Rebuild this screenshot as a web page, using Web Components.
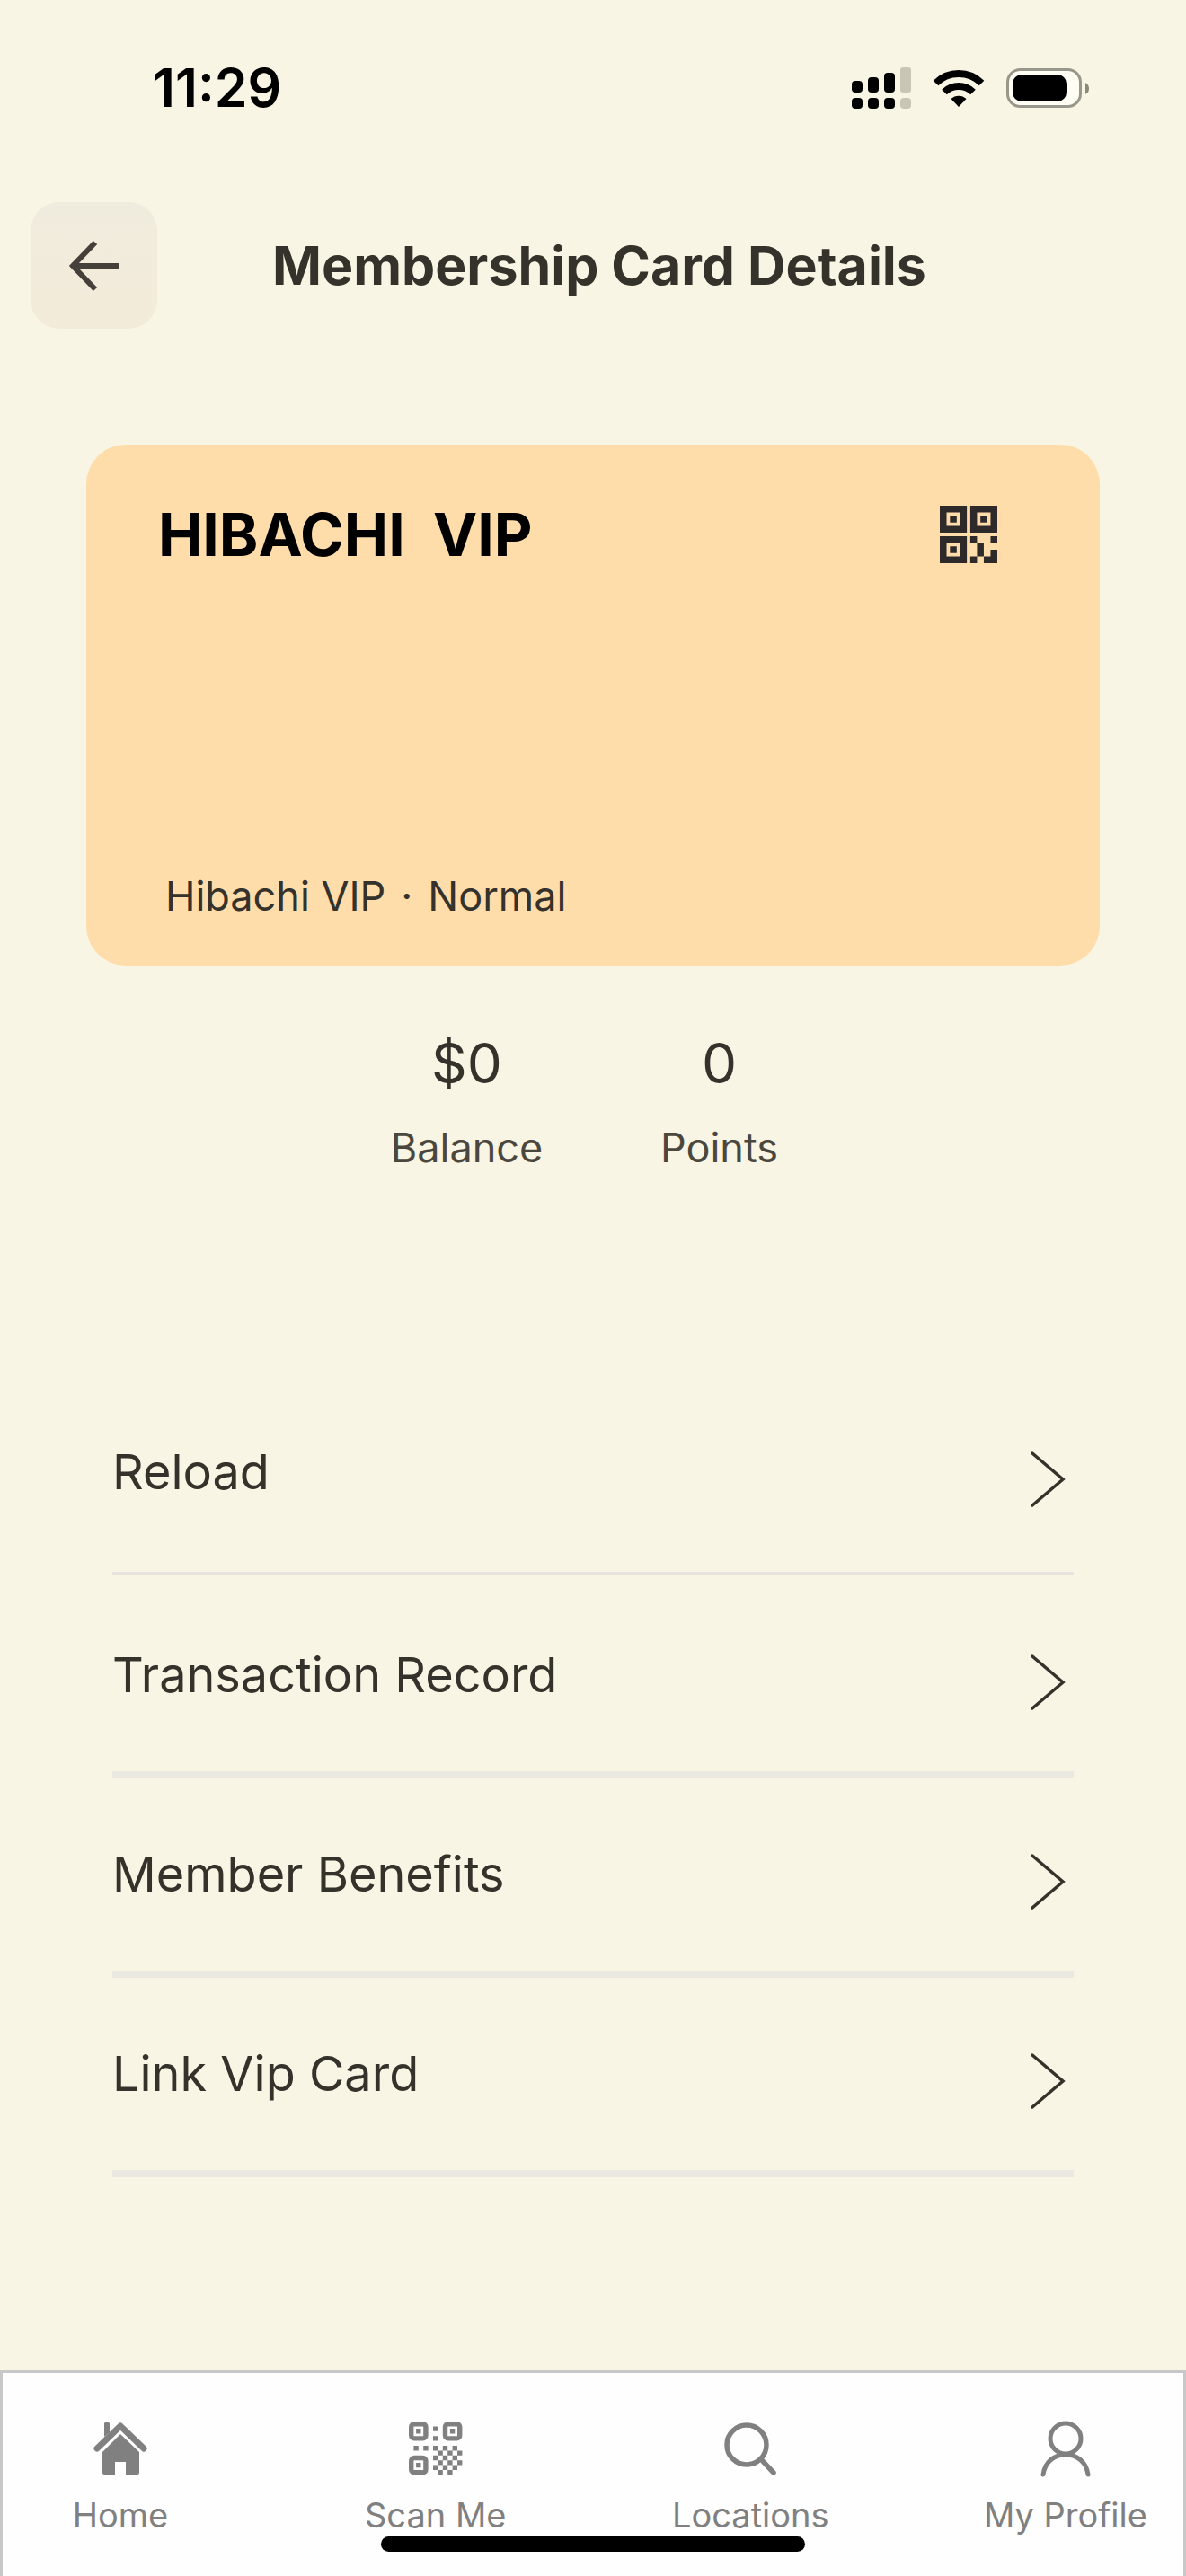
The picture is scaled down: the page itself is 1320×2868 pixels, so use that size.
<!DOCTYPE html>
<html lang="en">
<head>
<meta charset="utf-8">
<meta name="viewport" content="width=device-width, initial-scale=1">
<title>Membership Card Details</title>
<style>
html {
    background: #f9f5e4;
}

body {
    margin: 0;
    color: #35312b;
    font-family: Inter, "Liberation Sans", sans-serif;
}
</style>
</head>
<body>
<membership-page></membership-page>

<template id="status-bar">
<style>
:host {
    display: flex;
    align-items: center;
    justify-content: space-between;
    padding: 58px 107px 0 170px;
    color: #000;
}

time {
    font-size: 59px;
    font-weight: 600;
    line-height: 80px;
}

svg {
    display: block;
    width: 265px;
    height: 46px;
}
</style>
<time><slot></slot></time>
<svg viewBox="0 0 265 46" role="img" aria-label="Signal, Wi-Fi and battery">
    <g>
        <rect x="0" y="15" width="12" height="13" rx="4"/>
        <rect x="18" y="11" width="12" height="17" rx="4"/>
        <rect x="36" y="6" width="12" height="22" rx="4"/>
        <rect x="0" y="34" width="12" height="12" rx="4"/>
        <rect x="18" y="34" width="12" height="12" rx="4"/>
        <rect x="36" y="34" width="12" height="12" rx="4"/>
    </g>
    <g fill="#c9c6b6">
        <rect x="54" y="0" width="12" height="28" rx="3"/>
        <rect x="54" y="34" width="12" height="12" rx="4"/>
    </g>
    <g fill="none" stroke="#000" stroke-width="8">
        <path d="M93.500 17.500a36.500 36.500 0 0 1 51 0"/>
        <path d="M103 27.500a23 23 0 0 1 32 0"/>
    </g>
    <path d="M119 44l-8.500-9a12.500 12.500 0 0 1 17 0z"/>
    <rect x="173.500" y="2.500" width="81" height="41" rx="14" fill="#fffdf4" stroke="#99978a" stroke-width="3"/>
    <rect x="179" y="8" width="60" height="30" rx="10"/>
    <path d="M260 17q4 2 4 6.500t-4 6.500z" fill="#8a887c"/>
</svg>
</template>

<template id="page-header">
<style>
:host {
    display: grid;
    grid-template-columns: 141px 1fr 141px;
    align-items: center;
    padding: 87px 20px 0 34px;
}

button {
    display: flex;
    align-items: center;
    justify-content: center;
    height: 141px;
    padding: 0;
    border: 0;
    border-radius: 32px;
    background: linear-gradient(#f0ecdd, #f3ebda);
    color: #45403a;
    cursor: pointer;
}

svg {
    width: 60px;
    height: 60px;
}

h1 {
    margin: 0;
    font-size: 59px;
    font-weight: 700;
    line-height: 80px;
    text-align: center;
}
</style>
<button type="button" aria-label="Back">
    <svg viewBox="0 0 60 60" fill="none" stroke="currentColor" stroke-width="6">
        <path d="M31 4L6 30l25 26M6 30h52"/>
    </svg>
</button>
<h1><slot></slot></h1>
</template>

<template id="member-card">
<style>
:host {
    display: flex;
    flex-direction: column;
    justify-content: space-between;
    box-sizing: border-box;
    min-height: 580px;
    margin: 129px 96px 0;
    padding: 60px 114px 49px 80px;
    border-radius: 44px;
    background: #ffddab;
}

header {
    display: flex;
    align-items: center;
    justify-content: space-between;
}

h2 {
    margin: 0;
    color: #000;
    font-size: 66px;
    font-weight: 700;
    line-height: 80px;
    white-space: pre;
}

p {
    display: flex;
    gap: 17px;
    margin: 0;
    padding-left: 8px;
    font-size: 45px;
    line-height: 56px;
}

button {
    padding: 0;
    border: 0;
    background: none;
    color: #2e2a2a;
    cursor: pointer;
}

svg {
    display: block;
    width: 64px;
    height: 64px;
}
</style>
<header>
    <h2><slot name="name"></slot></h2>
    <button type="button" aria-label="Show QR code">
        <svg viewBox="0 0 17 17" fill="currentColor">
            <path fill-rule="evenodd" d="M0 0h8v8H0zM2 2v4h4V2zM9 0h8v8H9zM11 2v4h4V2zM0 9h8v8H0zM2 11v4h4v-4z"/>
            <path d="M3 3h2v2H3zM12 3h2v2h-2zM3 12h2v2H3z"/>
            <path d="M9 9h2v2H9zM15 9h2v2h-2zM11 11h2v4h-2zM9 15h2v2H9zM15 13h2v4h-4v-2h2z"/>
        </svg>
    </button>
</header>
<p><slot name="program"></slot><span>·</span><slot name="level"></slot></p>
</template>

<template id="member-stat">
<style>
:host {
    display: flex;
    flex-direction: column;
    gap: 26px;
    text-align: center;
}

.value {
    font-size: 62px;
    line-height: 80px;
}

.label {
    color: #4b473d;
    font-size: 45px;
    line-height: 56px;
}
</style>
<span class="value"><slot></slot></span>
<span class="label"></span>
</template>

<template id="menu-row">
<style>
:host {
    display: block;
    border-bottom: 8px solid #ebe7e1;
}

:host([first]) {
    margin-bottom: 4px;
    border-bottom: 4px solid #e8e3df;
}

a {
    display: flex;
    justify-content: space-between;
    min-height: 147px;
    padding: 67px 8px 0 0;
    color: inherit;
    font-size: 54px;
    line-height: 80px;
    text-decoration: none;
}

:host([first]) a {
    min-height: 151px;
}

svg {
    width: 44px;
    height: 64px;
    margin-top: 16px;
}
</style>
<a href="#">
    <slot></slot>
    <svg viewBox="0 0 44 64" fill="none" stroke="currentColor" stroke-width="3.500" stroke-linecap="round" aria-hidden="true">
        <path d="M6 3l34 29L6 61"/>
    </svg>
</a>
</template>

<template id="tab-item">
<style>
:host {
    display: block;
    width: 212px;
}

a {
    display: flex;
    flex-direction: column;
    align-items: center;
    gap: 20px;
    color: #808080;
    font-size: 38px;
    line-height: 48px;
    text-decoration: none;
    white-space: nowrap;
}

svg {
    width: 60px;
    height: 60px;
    overflow: visible;
}
</style>
<a href="#">
    <svg viewBox="0 0 60 60" aria-hidden="true"></svg>
    <slot></slot>
</a>
</template>

<template id="tab-bar">
<style>
:host {
    display: block;
    position: relative;
    border: 3px solid #c8c8c8;
    border-bottom: 0;
    background: #fefefe;
}

nav {
    display: flex;
    justify-content: space-between;
    padding: 54px 25px 44px;
}

.indicator {
    position: absolute;
    bottom: 27px;
    left: 50%;
    width: 472px;
    height: 17px;
    margin-left: -236px;
    border-radius: 9px;
    background: #000;
}
</style>
<nav><slot></slot></nav>
<div class="indicator"></div>
</template>

<template id="membership-page">
<style>
:host {
    display: flex;
    flex-direction: column;
    min-height: 100vh;
}

main {
    flex: 1;
}

.stats {
    display: grid;
    grid-template-columns: 281px 281px;
    justify-content: center;
    margin-top: 69px;
}

.menu {
    margin: 226px 125px 48px;
}
</style>
<status-bar>11:29</status-bar>
<page-header>Membership Card Details</page-header>
<main>
    <member-card>
        <span slot="name">HIBACHI&nbsp; VIP</span>
        <span slot="program">Hibachi VIP</span>
        <span slot="level">Normal</span>
    </member-card>
    <div class="stats">
        <member-stat label="Balance">$0</member-stat>
        <member-stat label="Points">0</member-stat>
    </div>
    <div class="menu">
        <menu-row first>Reload</menu-row>
        <menu-row>Transaction Record</menu-row>
        <menu-row>Member Benefits</menu-row>
        <menu-row>Link Vip Card</menu-row>
    </div>
</main>
<tab-bar>
    <tab-item icon="home">Home</tab-item>
    <tab-item icon="scan">Scan Me</tab-item>
    <tab-item icon="search">Locations</tab-item>
    <tab-item icon="profile">My Profile</tab-item>
</tab-bar>
</template>

<script>
/**
 * Attaches an open shadow root filled from the template
 * that has the same id as the element's tag name.
 */
class TemplateElement extends HTMLElement {
    constructor() {
        super();

        const template = document.getElementById(this.localName);
        this._shadowRoot = this.attachShadow({ mode: "open" });
        this._shadowRoot.appendChild(template.content.cloneNode(true));
    }
}

class StatusBar extends TemplateElement {}

class PageHeader extends TemplateElement {
    connectedCallback() {
        this._shadowRoot.querySelector("button").addEventListener("click", () => history.back());
    }
}

class MemberCard extends TemplateElement {}

class MemberStat extends TemplateElement {
    connectedCallback() {
        this._shadowRoot.querySelector(".label").textContent = this.getAttribute("label");
    }
}

class MenuRow extends TemplateElement {}

// Cells of the scan icon on an 11x11 grid, as [row, columns]
const SCAN_CELLS = [
    [1, [5]],
    [3, [5]],
    [5, [1, 3, 5, 7, 9]],
    [6, [6, 8, 10]],
    [7, [5, 7, 9]],
    [8, [6, 8, 10]],
    [9, [5, 7, 9]],
    [10, [6, 8]]
];

const ICONS = {
    home: `
<g fill="currentColor">
    <path d="M12 17V3q0-2 2-2h2q2 0 2 2v9z"/>
    <path d="M30 14L51 34v23q0 2-2 2H36V45H24v14H12q-2 0-2-2V34z"/>
</g>
<path d="M4 30L30 5l26 25" fill="none" stroke="#fefefe" stroke-width="12" stroke-linecap="round" stroke-linejoin="round"/>
<path d="M12 17V3q0-2 2-2h2q2 0 2 2v9z" fill="currentColor"/>
<path d="M4 30L30 5l26 25" fill="none" stroke="currentColor" stroke-width="7" stroke-linecap="round" stroke-linejoin="round"/>`,
    scan: `
<g transform="scale(5.400)" fill="currentColor">
    <g fill="none" stroke="currentColor">
        <rect x="0.500" y="0.500" width="3" height="3" rx="0.600"/>
        <rect x="7.500" y="0.500" width="3" height="3" rx="0.600"/>
        <rect x="0.500" y="7.500" width="3" height="3" rx="0.600"/>
    </g>
    <path d="M1.500 1.500h1v1h-1zM8.500 1.500h1v1h-1zM1.500 8.500h1v1h-1z"/>
    <path d="${SCAN_CELLS.map(([row, columns]) => columns.map(column => `M${column} ${row}h1v1h-1z`).join("")).join("")}"/>
</g>`,
    search: `
<g fill="none" stroke="currentColor" stroke-width="5.500" stroke-linecap="round">
    <circle cx="26" cy="26" r="22"/>
    <path d="M42 42l14 15"/>
</g>`,
    profile: `
<g fill="none" stroke="currentColor" stroke-width="5" stroke-linecap="round">
    <circle cx="30" cy="19" r="17"/>
    <path d="M5 59c2-14 12-22 25-22s23 8 25 22"/>
</g>`
};

class TabItem extends TemplateElement {
    connectedCallback() {
        this._shadowRoot.querySelector("svg").innerHTML = ICONS[this.getAttribute("icon")];
    }
}

class TabBar extends TemplateElement {}

class MembershipPage extends TemplateElement {}

window.customElements.define("status-bar", StatusBar);
window.customElements.define("page-header", PageHeader);
window.customElements.define("member-card", MemberCard);
window.customElements.define("member-stat", MemberStat);
window.customElements.define("menu-row", MenuRow);
window.customElements.define("tab-item", TabItem);
window.customElements.define("tab-bar", TabBar);
window.customElements.define("membership-page", MembershipPage);
</script>
</body>
</html>
